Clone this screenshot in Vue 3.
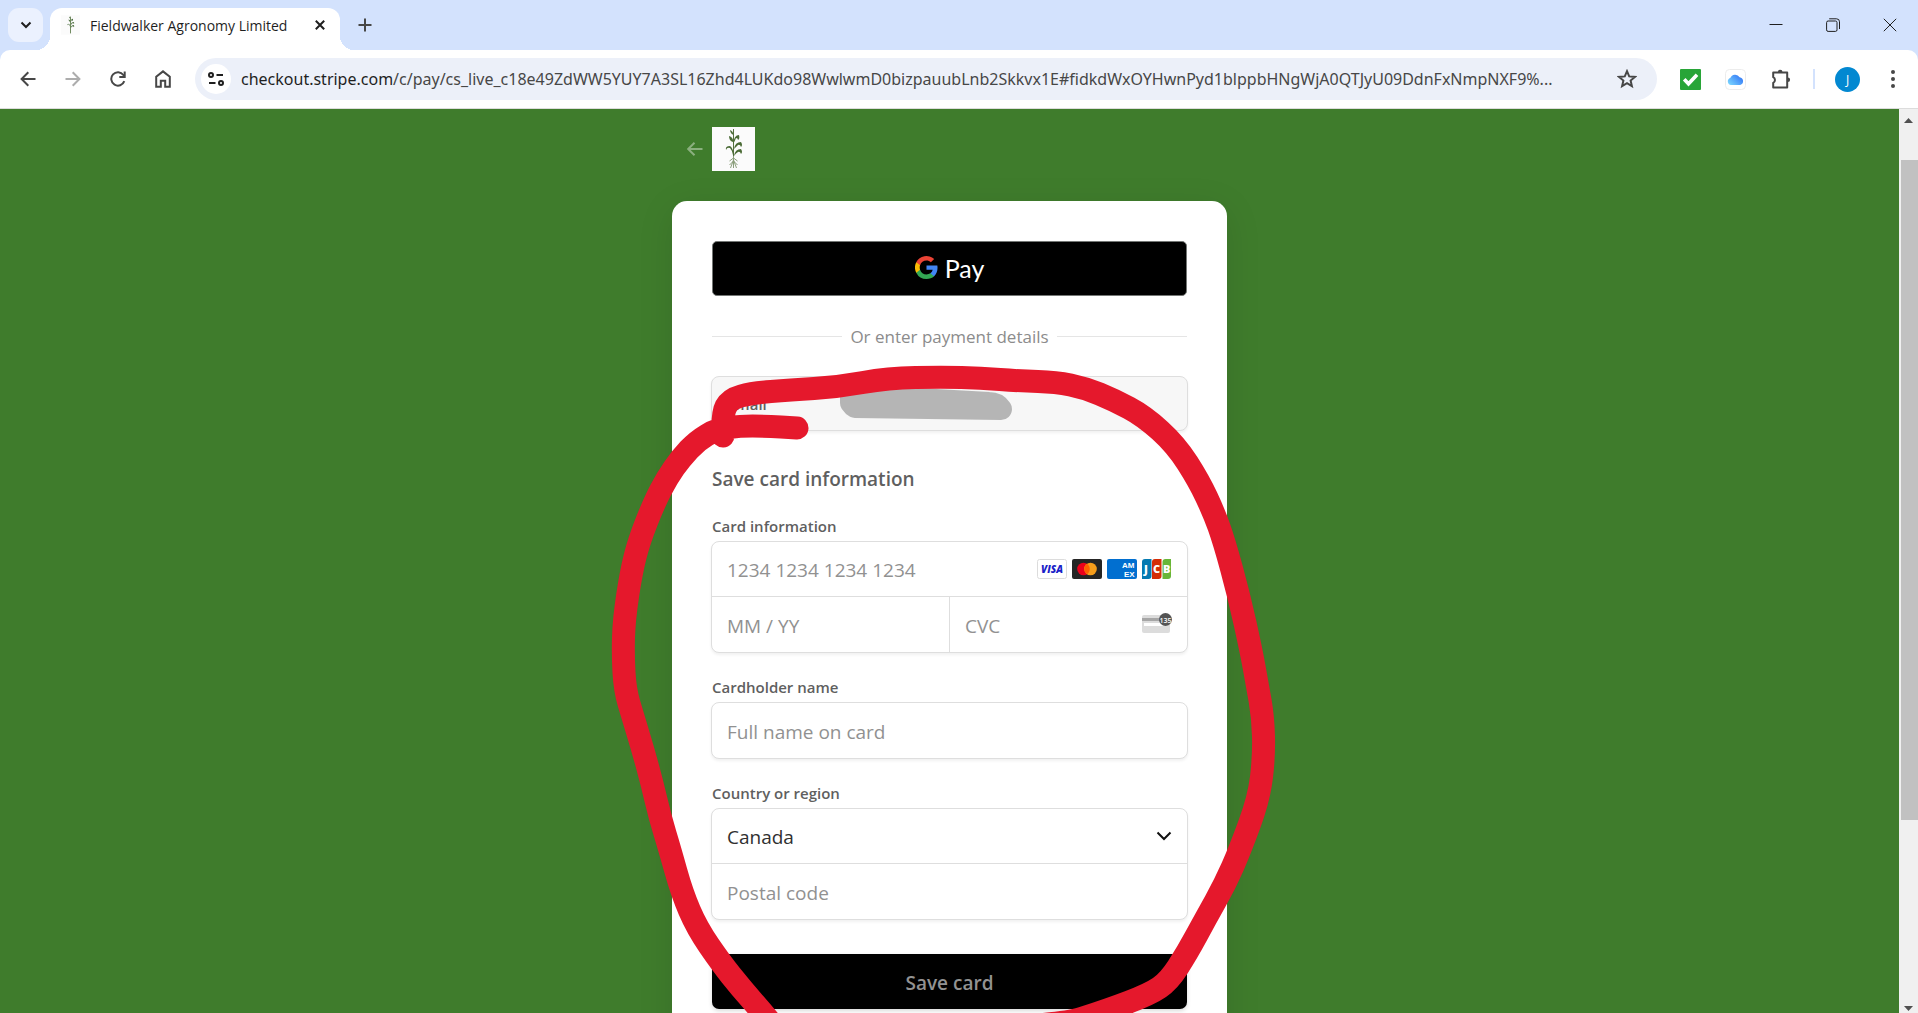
<template>
  <div class="browser">
    <header class="tab-strip">
      <button class="tab-search" type="button" aria-label="Search tabs">
        <svg width="12" height="12" viewBox="0 0 12 12" class="stroke-icon">
          <path d="M1.500 3.500 6 8l4.500-4.500" />
        </svg>
      </button>
      <div class="tab">
        <svg class="favicon" width="19" height="20" viewBox="0 0 43 44">
          <rect width="43" height="44" fill="#fbfbfb" />
          <path v-for="(leaf, i) in leaves" :key="i" :d="leaf" fill="#4f7040" />
          <path d="M21.500 3v38" stroke="#5f7d4c" stroke-width="2" />
        </svg>
        <span class="tab-title">Fieldwalker Agronomy Limited</span>
        <button class="tab-close" type="button" aria-label="Close tab">
          <svg width="10" height="10" viewBox="0 0 10 10" class="stroke-icon">
            <path d="M.8.8l8.400 8.400M9.200.8.8 9.200" />
          </svg>
        </button>
      </div>
      <button class="new-tab" type="button" aria-label="New tab">
        <svg width="14" height="14" viewBox="0 0 14 14" class="stroke-icon grey">
          <path d="M7 .5v13M.5 7h13" />
        </svg>
      </button>
      <div class="window-buttons">
        <button type="button" aria-label="Minimize">
          <svg width="14" height="14" viewBox="0 0 14 14" class="stroke-icon thin"><path d="M.5 6.500h13" /></svg>
        </button>
        <button type="button" aria-label="Restore">
          <svg width="14" height="14" viewBox="0 0 14 14" class="stroke-icon thin">
            <rect x=".6" y="3" width="10.400" height="10.400" rx="1.500" />
            <path d="M3.200.8h7.300a3 3 0 0 1 3 3v7.200" />
          </svg>
        </button>
        <button type="button" aria-label="Close">
          <svg width="14" height="14" viewBox="0 0 14 14" class="stroke-icon thin">
            <path d="M.8.8l12.400 12.400M13.200.8.8 13.200" />
          </svg>
        </button>
      </div>
    </header>

    <nav class="toolbar">
      <button type="button" aria-label="Back">
        <svg width="16" height="16" viewBox="0 0 16 16" class="stroke-icon grey">
          <path d="M15.500 8H2M8.300 1.300 1.600 8l6.700 6.700" />
        </svg>
      </button>
      <button type="button" aria-label="Forward" disabled>
        <svg width="16" height="16" viewBox="0 0 16 16" class="stroke-icon pale">
          <path d="M.5 8H14M7.700 1.300 14.400 8l-6.700 6.700" />
        </svg>
      </button>
      <button type="button" aria-label="Reload">
        <svg width="16" height="16" viewBox="0 0 16 16" class="stroke-icon grey">
          <path d="M14.300 10.200a6.700 6.700 0 1 1-.9-6.200l1 1.500" />
          <path d="M14.700.5v5.400H9.300" />
        </svg>
      </button>
      <button type="button" aria-label="Home">
        <svg width="16" height="18" viewBox="0 0 16 18" class="stroke-icon grey">
          <path d="M1.200 16.800V6.800L8 1.400l6.800 5.400v10h-4.600v-6H5.800v6z" />
        </svg>
      </button>
      <div class="omnibox">
        <span class="site-info">
          <svg width="16" height="14" viewBox="0 0 16 14" class="stroke-icon">
            <circle cx="3" cy="3" r="2" />
            <path d="M8.500 3H15M1 11h6.500" />
            <circle cx="13" cy="11" r="2" />
          </svg>
        </span>
        <span class="url"><b>checkout.stripe.com</b>/c/pay/cs_live_c18e49ZdWW5YUY7A3SL16Zhd4LUKdo98WwlwmD0bizpauubLnb2Skkvx1E#fidkdWxOYHwnPyd1blppbHNgWjA0QTJyU09DdnFxNmpNXF9%...</span>
        <svg class="star stroke-icon grey" width="20" height="20" viewBox="0 0 20 20">
          <path d="M10 2.200l2.200 5.200 5.700.5-4.300 3.700 1.300 5.500-4.900-2.900-4.900 2.900 1.300-5.500L2.100 7.900l5.700-.5z" />
        </svg>
      </div>
      <button class="ext" type="button" aria-label="Checker extension">
        <svg width="21" height="21" viewBox="0 0 21 21">
          <rect width="21" height="21" rx="1" fill="#28a538" />
          <path d="M4.200 10.300l4.300 4.500 8.500-9" fill="none" stroke="#fff" stroke-width="3.600" />
        </svg>
      </button>
      <button class="ext" type="button" aria-label="Cloud extension">
        <svg width="21" height="21" viewBox="0 0 21 21">
          <defs>
            <linearGradient id="cloud" x1="0" y1="1" x2="1" y2="0.300">
              <stop offset="0" stop-color="#7fdcff" />
              <stop offset="1" stop-color="#3478f6" />
            </linearGradient>
          </defs>
          <rect x=".5" y=".5" width="20" height="20" rx="4" fill="#fff" stroke="#ececec" />
          <path d="M6 16a3.600 3.600 0 0 1-.7-7 5.200 5.200 0 0 1 9.300-.8 4 4 0 0 1 .6 7.800z" fill="url(#cloud)" />
        </svg>
      </button>
      <button class="ext" type="button" aria-label="Extensions">
        <svg width="22" height="22" viewBox="0 0 22 22">
          <path
            d="M3.200 4.600h14v14.800h-14v-4.600a3.100 3.100 0 0 0 0-5.600z"
            fill="none" stroke="#474747" stroke-width="2" stroke-linejoin="round"
          />
          <path d="M7.900 4a2.300 2.300 0 0 1 4.600 0zM17.800 9.500a2.300 2.300 0 0 1 0 4.600z" fill="#474747" />
        </svg>
      </button>
      <span class="divider"></span>
      <button class="profile" type="button" aria-label="Profile"><span>J</span></button>
      <button type="button" aria-label="Menu">
        <svg width="4" height="18" viewBox="0 0 4 18" fill="#474747">
          <circle cx="2" cy="2" r="2" />
          <circle cx="2" cy="9" r="2" />
          <circle cx="2" cy="16" r="2" />
        </svg>
      </button>
    </nav>

    <div class="viewport">
      <main class="page">
        <div class="brand">
          <a class="back" href="#" aria-label="Back to merchant">
            <svg width="16" height="14" viewBox="0 0 16 14"><path d="M15.500 7H1.200M7.500.8 1.200 7l6.300 6.200" /></svg>
          </a>
          <svg width="43" height="44" viewBox="0 0 43 44" role="img" aria-label="Logo">
            <rect width="43" height="44" fill="#fbfbfb" />
            <path d="M21.500 2v30" stroke="#55703f" stroke-width="1" />
            <path v-for="(leaf, i) in leaves" :key="i" :d="leaf" fill="#4a6b35" />
            <path
              d="M21.500 29v12M21.500 31l-4 3M21.500 31l4 3M21.500 33l-3 8M21.500 33l3 8M21.500 34l-4 4M21.500 34l4 4"
              fill="none" stroke="#8c9f7c" stroke-width="1"
            />
          </svg>
        </div>

        <form class="checkout" @submit.prevent>
          <button class="gpay" type="button" aria-label="Google Pay">
            <svg width="23" height="23" viewBox="2 2 20 20">
              <path fill="#4285f4" d="M21.600 12.230c0-.68-.06-1.360-.18-2.020H12v3.820h5.400a4.600 4.600 0 0 1-2 3.020v2.500h3.230c1.890-1.740 2.970-4.300 2.970-7.320z" />
              <path fill="#34a853" d="M12 22c2.700 0 4.960-.9 6.620-2.420l-3.230-2.500c-.9.600-2.040.960-3.390.960-2.600 0-4.810-1.760-5.600-4.120H3.070v2.580A10 10 0 0 0 12 22z" />
              <path fill="#fbbc04" d="M6.400 13.920a6 6 0 0 1 0-3.830V7.510H3.070a10 10 0 0 0 0 8.990z" />
              <path fill="#ea4335" d="M12 5.960c1.470 0 2.790.5 3.820 1.500l2.870-2.870A10 10 0 0 0 3.070 7.510L6.400 10.090C7.190 7.730 9.400 5.960 12 5.960z" />
            </svg>
            <span>Pay</span>
          </button>

          <div class="separator"><span>Or enter payment details</span></div>

          <div class="group email">
            <label for="email">Email</label>
            <input id="email" type="email" disabled />
          </div>

          <h2>Save card information</h2>

          <label class="caption" for="number">Card information</label>
          <div class="group">
            <div class="cell">
              <input id="number" type="text" placeholder="1234 1234 1234 1234" />
              <div class="brands">
                <svg width="30" height="20" viewBox="0 0 30 20">
                  <rect x=".5" y=".5" width="29" height="19" rx="2" fill="#fff" stroke="#dcdcdc" />
                  <text x="15" y="14" class="visa">VISA</text>
                </svg>
                <svg width="30" height="20" viewBox="0 0 30 20">
                  <rect width="30" height="20" rx="2" fill="#252525" />
                  <circle cx="11.500" cy="10" r="6.300" fill="#eb001b" />
                  <circle cx="18.500" cy="10" r="6.300" fill="#f79e1b" />
                  <path d="M15 4.800a6.300 6.300 0 0 1 0 10.400 6.300 6.300 0 0 1 0-10.400z" fill="#ff5f00" />
                </svg>
                <svg width="30" height="20" viewBox="0 0 30 20">
                  <rect width="30" height="20" rx="2" fill="#016fd0" />
                  <text class="amex"><tspan x="15" y="9">AM</tspan><tspan x="17" y="18">EX</tspan></text>
                </svg>
                <svg width="30" height="20" viewBox="0 0 30 20">
                  <path d="M3 0h6.500v17a3 3 0 0 1-3 3H0V3a3 3 0 0 1 3-3z" fill="#047ab1" />
                  <path d="M13 0h6.500v17a3 3 0 0 1-3 3H10V3a3 3 0 0 1 3-3z" fill="#d42d06" />
                  <path d="M23.500 0H29v17a3 3 0 0 1-3 3h-5.500V3a3 3 0 0 1 3-3z" fill="#67b637" />
                  <text class="jcb"><tspan x="2" y="14">J</tspan><tspan x="11">C</tspan><tspan x="21">B</tspan></text>
                </svg>
              </div>
            </div>
            <div class="split">
              <div class="cell">
                <input type="text" placeholder="MM / YY" aria-label="Expiration" />
              </div>
              <div class="cell">
                <input type="text" placeholder="CVC" aria-label="CVC" />
                <svg class="cvc" width="30" height="28" viewBox="0 0 30 28">
                  <rect y="4" width="28" height="18" rx="2" fill="#dcdcdc" />
                  <path d="M0 7h22v3H0z" fill="#a6a6a6" />
                  <path d="M2 12h24v3H2z" fill="#fff" />
                  <circle cx="23.500" cy="8.500" r="6.500" fill="#545454" />
                  <text x="23.500" y="11.500">135</text>
                </svg>
              </div>
            </div>
          </div>

          <label class="caption" for="holder">Cardholder name</label>
          <div class="group">
            <div class="cell">
              <input id="holder" type="text" placeholder="Full name on card" />
            </div>
          </div>

          <label class="caption" for="country">Country or region</label>
          <div class="group">
            <div class="cell">
              <select id="country" v-model="country">
                <option>Canada</option>
                <option>United States</option>
              </select>
              <svg class="chevron" width="16" height="10" viewBox="0 0 16 10">
                <path d="M1.500 1.500 8 8l6.500-6.500" />
              </svg>
            </div>
            <div class="cell">
              <input type="text" placeholder="Postal code" aria-label="Postal code" />
            </div>
          </div>

          <button class="save" type="submit">Save card</button>

          <svg class="markup" width="700" height="673" viewBox="600 340 700 673">
            <path
              class="redaction"
              d="M851 396L851 403Q853 406 855 407L1001 409Q997 403 989 403L900 398Z"
            />
            <path class="marker" :d="circlePath" />
          </svg>
        </form>
      </main>

      <div class="scrollbar">
        <svg width="9" height="5" viewBox="0 0 9 5"><path d="M0 5 4.500 0 9 5z" /></svg>
        <span class="track"><span class="thumb"></span></span>
        <svg width="9" height="5" viewBox="0 0 9 5"><path d="M0 0h9L4.500 5z" /></svg>
      </div>
    </div>
  </div>
</template>

<script setup>
import { ref } from 'vue'

const country = ref('Canada')

const leaves = [
  'M21.500 8q-3-1-3.500-5 3 1 3.500 5z',
  'M21 15q-4-1-4-6 4 1 4.500 6z',
  'M21 17q1-9 6-9 1 4-1 5 0-2-2-2-1 3-3 6z',
  'M22 22q1-7 7-7 2 3 0 5-1-3-3-2-2 2-4 4z',
  'M21 28q-1-5-3-7-3-1-4 2-1-4 4-4 3 2 4 9z',
  'M22 29q1-7 7-7 2 3 0 5-1-3-3-2-2 1-4 4z'
]

// centre line of the freehand loop, in order of drawing
const loop = [
  [723, 436], [722, 414], [730, 399], [752, 393], [790, 390], [838, 387],
  [888, 378], [943, 377], [980, 378], [1020, 381], [1056, 382], [1085, 388],
  [1114, 400], [1144, 416], [1176, 445], [1199, 481], [1214, 513], [1224, 541],
  [1239, 596], [1251, 650], [1257, 683], [1263, 717], [1264, 756], [1259, 798],
  [1240, 850], [1225, 884], [1206, 918], [1187, 953], [1169, 981], [1150, 994],
  [1108, 1010], [1055, 1027], [780, 1034], [763, 1013], [741, 988], [721, 963],
  [697, 928], [682, 893], [670, 850], [660, 817], [652, 783], [643, 750],
  [633, 717], [625, 690], [623, 655], [624, 620], [631, 573], [639, 541],
  [654, 503], [667, 478], [681, 458], [697, 441], [717, 429], [740, 426],
  [765, 426], [797, 428]
]

function smooth(points) {
  let d = `M${points[0]}`
  for (let i = 1; i < points.length - 1; i++) {
    const [x, y] = points[i]
    const [nx, ny] = points[i + 1]
    d += `Q${x} ${y} ${(x + nx) / 2} ${(y + ny) / 2}`
  }
  return `${d}L${points[points.length - 1]}`
}

const circlePath = smooth(loop)
</script>

<style>
body {
  margin: 0;
}
</style>

<style scoped>
.browser {
  display: flex;
  flex-direction: column;
  height: 100vh;
  overflow: hidden;
  background: #d3e2fd;
  color: #1f1f1f;
  font-family: "Open Sans", "Noto Sans", sans-serif;
}

.browser * {
  box-sizing: border-box;
}

button {
  display: flex;
  align-items: center;
  justify-content: center;
  padding: 0;
  border: none;
  background: none;
  font-family: inherit;
}

svg {
  display: block;
  flex: none;
}

.stroke-icon {
  fill: none;
  stroke: #1f1f1f;
  stroke-width: 2;
}

.thin { stroke-width: 1; }
.grey { stroke: #474747; }
.pale { stroke: #adadad; }

.tab-strip {
  display: flex;
  align-items: flex-start;
  height: 50px;
  padding: 8px 0 0 8px;
}

.tab-search {
  width: 35px;
  height: 34px;
  margin-right: 7px;
  border-radius: 11px;
  background: #ebf1fe;
}

.tab {
  position: relative;
  display: flex;
  align-items: center;
  width: 290px;
  height: 42px;
  padding: 0 11px 8px;
  border-radius: 12px 12px 0 0;
  background: #fff;
}

.tab::before,
.tab::after {
  content: "";
  position: absolute;
  bottom: 0;
  width: 14px;
  height: 14px;
}

.tab::before {
  right: 100%;
  background: radial-gradient(circle at 0 0, transparent 14px, #fff 14px);
}

.tab::after {
  left: 100%;
  background: radial-gradient(circle at 100% 0, transparent 14px, #fff 14px);
}

.tab-title {
  flex: 1;
  margin-left: 10px;
  font-size: 14px;
  white-space: nowrap;
}

.tab-close {
  width: 18px;
  height: 18px;
}

.new-tab {
  width: 34px;
  height: 34px;
  margin-left: 8px;
}

.window-buttons {
  display: flex;
  margin-left: auto;
}

.window-buttons button {
  width: 57px;
  height: 34px;
}

.toolbar {
  display: flex;
  align-items: center;
  height: 59px;
  padding: 0 3px 0 5px;
  border-bottom: 1px solid #dcdcdc;
  border-radius: 10px 10px 0 0;
  background: #fff;
}

.toolbar button {
  flex: none;
  width: 45px;
  height: 42px;
}

.omnibox {
  display: flex;
  align-items: center;
  flex: 1;
  min-width: 0;
  height: 42px;
  margin: 0 11px 0 10px;
  padding: 0 20px 0 6px;
  border-radius: 21px;
  background: #ecf0f9;
}

.site-info {
  display: flex;
  align-items: center;
  justify-content: center;
  flex: none;
  width: 30px;
  height: 30px;
  margin-right: 10px;
  border-radius: 50%;
  background: #fff;
}

.url {
  flex: 1;
  min-width: 0;
  overflow: hidden;
  color: #474747;
  font-family: "Noto Sans", sans-serif;
  font-size: 16px;
  white-space: nowrap;
}

.url b {
  color: #1f1f1f;
  font-weight: 400;
}

.divider {
  flex: none;
  width: 2px;
  height: 20px;
  margin: 0 10px;
  background: #d3e2fd;
}

.profile span {
  width: 25px;
  height: 25px;
  border-radius: 50%;
  background: #0288d1;
  color: #fff;
  font-size: 12px;
  line-height: 25px;
}

.viewport {
  display: flex;
  flex: 1;
  min-height: 0;
}

.page {
  flex: 1;
  overflow: hidden;
  background: #3f7c2c;
}

.brand,
.checkout {
  width: 555px;
  margin: 0 auto;
}

.brand {
  display: flex;
  align-items: center;
  gap: 9px;
  padding: 18px 15px 30px;
}

.back {
  fill: none;
  stroke: #8bb07f;
  stroke-width: 2;
}

.checkout {
  position: relative;
  padding: 40px;
  border-radius: 15px;
  background: #fff;
  box-shadow: 0 8px 36px rgba(0, 0, 0, 0.1);
}

.gpay {
  gap: 7px;
  width: 100%;
  height: 55px;
  padding-bottom: 2px;
  border: 1px solid #747775;
  border-radius: 5px;
  background: #000;
  color: #fff;
  font-family: Lato, sans-serif;
  font-size: 25px;
}

.separator {
  display: flex;
  align-items: center;
  gap: 8px;
  height: 24px;
  margin: 28px 0;
  color: #8c8c8c;
  font-size: 17px;
  white-space: nowrap;
}

.separator::before,
.separator::after {
  content: "";
  flex: 1;
  height: 1px;
  background: #e5e5e5;
}

.group {
  margin: 0 -1px;
  border: 1px solid #dedede;
  border-radius: 8px;
  background: #fff;
  box-shadow: 0 2px 3px rgba(0, 0, 0, 0.06);
}

.email {
  display: flex;
  align-items: center;
  height: 55px;
  padding-left: 15px;
  background: #f7f7f7;
}

.email label,
.caption {
  color: #5f5f5f;
  font-size: 15px;
  font-weight: 600;
}

.email input {
  height: 40px;
}

h2 {
  margin: 34px 0 21px;
  color: #5f5f5f;
  font-size: 19px;
  font-weight: 600;
  line-height: 28px;
}

.caption {
  display: block;
  margin-bottom: 3px;
  line-height: 24px;
}

.group + .caption {
  margin-top: 22px;
}

.cell {
  display: flex;
  align-items: center;
  flex: 1;
  min-width: 0;
  height: 55px;
  padding: 0 15px;
}

.group > .cell:not(:last-child) {
  height: 54px;
}

.cell + .cell,
.split {
  border-top: 1px solid #dedede;
}

.group > .cell + .cell,
.split {
  height: 56px;
}

.split {
  display: flex;
}

.split .cell + .cell {
  border-top: none;
  border-left: 1px solid #dedede;
}

input,
select {
  flex: 1;
  min-width: 0;
  height: 100%;
  padding: 2px 0 0;
  border: none;
  outline: none;
  appearance: none;
  background: transparent;
  color: #303030;
  font-family: inherit;
  font-size: 19px;
}

input::placeholder {
  color: #919191;
}

.brands {
  display: flex;
  gap: 5px;
}

.brands text {
  font-family: "Open Sans", sans-serif;
  font-weight: 800;
}

.visa {
  fill: #1a1fc8;
  font-size: 10px;
  font-style: italic;
  text-anchor: middle;
}

.brands .amex {
  fill: #fff;
  font-family: "Liberation Sans", sans-serif;
  font-size: 8px;
}

.jcb {
  fill: #fff;
  font-size: 11px;
}

.cvc text {
  fill: #fff;
  font-size: 7px;
  font-weight: 600;
  text-anchor: middle;
}

.chevron {
  fill: none;
  stroke: #111;
  stroke-width: 2;
}

.save {
  width: 100%;
  height: 55px;
  margin-top: 34px;
  padding-top: 2px;
  border-radius: 7px;
  background: #000;
  box-shadow: 0 2px 4px rgba(0, 0, 0, 0.15);
  color: #929292;
  font-size: 19px;
  font-weight: 600;
}

/* pen strokes lie over the form, anchored to the card */
.markup {
  position: absolute;
  top: 139px;
  left: -72px;
  pointer-events: none;
}

.markup path {
  stroke-linecap: round;
  stroke-linejoin: round;
}

.redaction {
  fill: #b5b5b5;
  stroke: #b5b5b5;
  stroke-width: 22;
}

.marker {
  fill: none;
  stroke: #e5182c;
  stroke-width: 23;
}

.scrollbar {
  display: flex;
  flex-direction: column;
  align-items: center;
  width: 19px;
  padding: 9px 0 2px;
  background: #f0f0f0;
  fill: #505050;
}

.track {
  display: flex;
  flex: 1;
  flex-direction: column;
  align-self: stretch;
  margin: 37px 0 0 2px;
}

.thumb {
  height: 78%;
  background: #c1c1c1;
}
</style>
